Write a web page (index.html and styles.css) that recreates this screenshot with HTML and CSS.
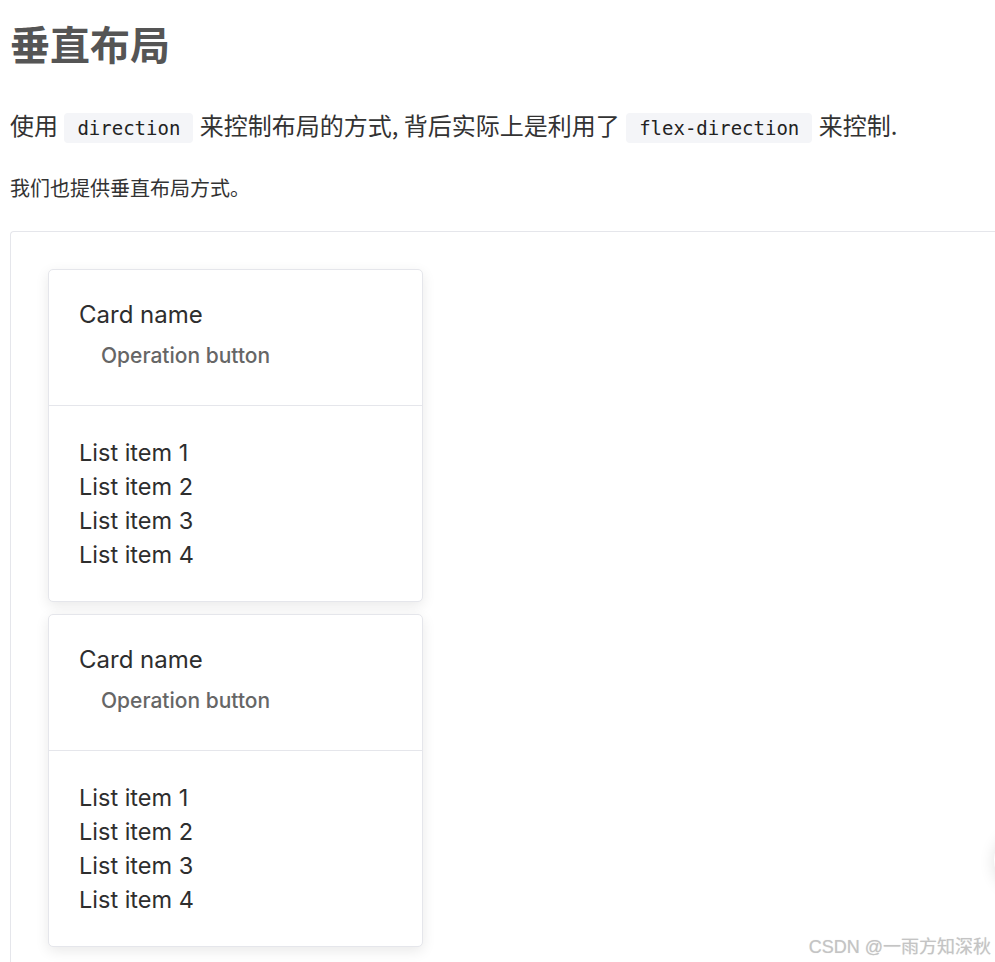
FILE: index.html
```html
<!DOCTYPE html>
<html>
<head>
	<meta charset="utf-8">
	<title>垂直布局</title>
	<link rel="stylesheet" href="styles.css">
</head>
<body>
<div class="doc">
	<!--========== TITLE ==========-->
	<h1 class="doc__title">垂直布局</h1>
	<p class="doc__text">使用 <code>direction</code> 来控制布局的方式, 背后实际上是利用了 <code>flex-direction</code> 来控制.</p>
	<p class="doc__note">我们也提供垂直布局方式。</p>

	<!--========== DEMO BOX ==========-->
	<div class="demo">
		<div class="space__vertical">

			<div class="card">
				<div class="card__header">
					<div class="card__title">Card name</div>
					<div class="card__extra">Operation button</div>
				</div>
				<div class="card__body">
					<p>List item 1</p>
					<p>List item 2</p>
					<p>List item 3</p>
					<p>List item 4</p>
				</div>
			</div>

			<div class="card">
				<div class="card__header">
					<div class="card__title">Card name</div>
					<div class="card__extra">Operation button</div>
				</div>
				<div class="card__body">
					<p>List item 1</p>
					<p>List item 2</p>
					<p>List item 3</p>
					<p>List item 4</p>
				</div>
			</div>

		</div>
	</div>
</div>

<!--========== FLOATING BITS ==========-->
<div class="float__btn"></div>
<div class="watermark">CSDN @一雨方知深秋</div>
</body>
</html>
```

FILE: styles.css
```css
*{
	margin: 0;
	padding: 0;
	box-sizing: border-box;
}

body{
	background-color: #fff;
	font-family: Inter, "Noto Sans CJK SC", sans-serif;
	color: #333;
	overflow: hidden;
	height: 962px;
}

.doc{
	padding-left: 10px;
}

.doc__title{
	margin-top: 19px;
	font-size: 40px;
	line-height: 48px;
	font-weight: 700;
	color: #555;
	font-family: "Noto Sans CJK SC", sans-serif;
}

.doc__text{
	margin-top: 42px;
	font-size: 24px;
	line-height: 32px;
	font-family: "Noto Sans CJK SC", sans-serif;
	color: #333;
}

.doc__text code{
	font-family: "DejaVu Sans Mono", monospace;
	font-size: 19px;
	background-color: #f4f5f8;
	border-radius: 4px;
	padding: 4px 13px;
	margin: 0 1px;
	color: #222;
}

.doc__note{
	margin-top: 30px;
	font-size: 20px;
	line-height: 28px;
	font-family: "Noto Sans CJK SC", sans-serif;
	color: #333;
}

.demo{
	margin-top: 29px;
	border: 1px solid #e5e6eb;
	border-right: none;
	border-bottom: none;
	border-radius: 4px 0 0 0;
	width: 986px;
	height: 760px;
	padding: 37px 0 0 37px;
}

.space__vertical{
	display: flex;
	flex-direction: column;
	gap: 12px;
}

.card{
	width: 375px;
	background-color: #fff;
	border: 1px solid #e5e6eb;
	border-radius: 5px;
	box-shadow: 0 4px 14px rgba(0,0,0,0.09);
}

.card__header{
	height: 136px;
	padding: 24px 30px 0;
	border-bottom: 1px solid #e5e6eb;
}

.card__title{
	font-size: 24px;
	line-height: 42px;
	color: #2e2e2e;
}

.card__extra{
	padding-left: 22px;
	font-size: 21px;
	line-height: 40px;
	font-weight: 500;
	color: #666;
}

.card__body{
	height: 195px;
	padding: 30px 30px 0;
}

.card__body p{
	font-size: 23.5px;
	line-height: 34px;
	color: #2e2e2e;
}

.float__btn{
	position: absolute;
	left: 994px;
	top: 830px;
	width: 60px;
	height: 60px;
	border-radius: 50%;
	background-color: #fff;
	box-shadow: 0 2px 16px rgba(0,0,0,0.12);
}

.watermark{
	position: absolute;
	right: 4px;
	top: 932px;
	font-family: "Liberation Sans", "Noto Sans CJK SC", sans-serif;
	font-size: 18px;
	color: #c4c4c4;
	text-shadow: 0 0 1px rgba(0,0,0,0.15);
}
```
